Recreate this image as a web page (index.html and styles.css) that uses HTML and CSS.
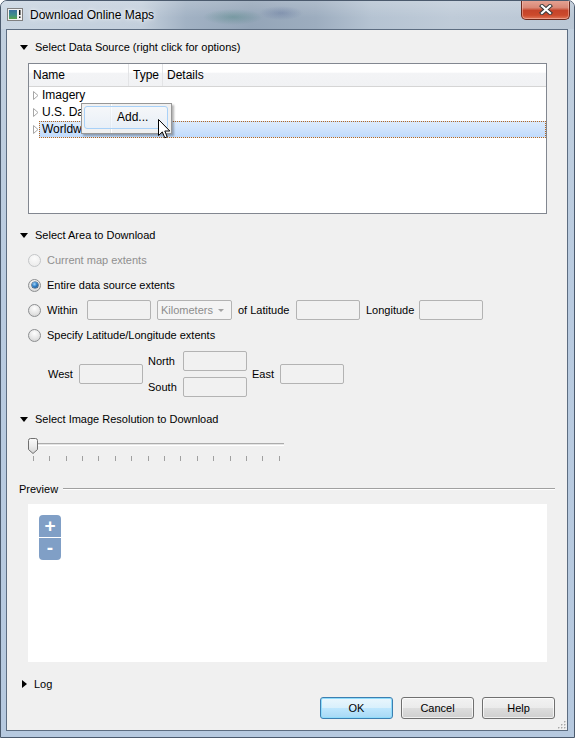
FILE: index.html
```html
<!DOCTYPE html>
<html>
<head>
<meta charset="utf-8">
<title>Download Online Maps</title>
<link rel="stylesheet" href="styles.css">
</head>
<body>
<div class="window">
  <div class="titlebar">
    <svg class="app-icon" width="16" height="13" viewBox="0 0 16 13">
      <defs>
        <linearGradient id="pic" x1="0" y1="0" x2="0" y2="1">
          <stop offset="0" stop-color="#3b6f9e"/>
          <stop offset="0.55" stop-color="#3f8d8a"/>
          <stop offset="1" stop-color="#5aa44c"/>
        </linearGradient>
      </defs>
      <rect x="0.5" y="0.5" width="15" height="12" fill="#f2f2f2" stroke="#808080"/>
      <rect x="2" y="2" width="8" height="9" fill="url(#pic)"/>
      <rect x="12" y="2" width="1.5" height="5" fill="#111"/>
      <rect x="12" y="8.5" width="1.5" height="1.5" fill="#111"/>
    </svg>
    <span class="title">Download Online Maps</span>
    <div class="close-btn">
      <svg width="14" height="11" viewBox="0 0 14 11">
        <path d="M3 2 L11 9 M11 2 L3 9" stroke="#3b3b3b" stroke-width="4.2" stroke-linecap="square"/>
        <path d="M3 2 L11 9 M11 2 L3 9" stroke="#ffffff" stroke-width="2.2" stroke-linecap="square"/>
      </svg>
    </div>
  </div>

  <div class="client">
    <div class="sec-head head-source"><span class="tri-down"></span><span>Select Data Source (right click for options)</span></div>

    <div class="tree">
      <div class="tree-header">
        <div class="th th-name">Name</div>
        <div class="th th-type">Type</div>
        <div class="th th-details">Details</div>
      </div>
      <div class="tree-row">
        <svg class="exp" width="6" height="9" viewBox="0 0 6 9"><path d="M0.5 0.5 L5 4.5 L0.5 8.5 Z" fill="#fff" stroke="#a6a6a6"/></svg>
        <span>Imagery</span>
      </div>
      <div class="tree-row">
        <svg class="exp" width="6" height="9" viewBox="0 0 6 9"><path d="M0.5 0.5 L5 4.5 L0.5 8.5 Z" fill="#fff" stroke="#a6a6a6"/></svg>
        <span>U.S. Data</span>
      </div>
      <div class="tree-row selected">
        <svg class="exp" width="6" height="9" viewBox="0 0 6 9"><path d="M0.5 0.5 L5 4.5 L0.5 8.5 Z" fill="#fff" stroke="#a6a6a6"/></svg>
        <span class="sel-bar">Worldwide Data</span>
      </div>

      <div class="ctx-menu">
        <div class="ctx-item">Add...</div>
      </div>
      <svg class="cursor" width="13" height="20" viewBox="0 0 13 20">
        <path d="M0.5 0.5 L0.5 16.5 L4.3 12.9 L6.8 18.8 L9.2 17.8 L6.8 12 L11.8 12 Z" fill="#ffffff" stroke="#000000" stroke-linejoin="round"/>
      </svg>
    </div>

    <div class="sec-head head-area"><span class="tri-down"></span><span>Select Area to Download</span></div>

    <div class="radio-group">
      <div class="radio-row">
        <span class="radio disabled"></span>
        <span class="disabled-text">Current map extents</span>
      </div>
      <div class="radio-row">
        <span class="radio checked"></span>
        <span>Entire data source extents</span>
      </div>
      <div class="radio-row">
        <span class="radio"></span>
        <span class="lbl lbl-within">Within</span>
        <span class="edit"></span>
        <span class="combo"><span class="combo-text">Kilometers</span><span class="combo-arrow"></span></span>
        <span class="lbl lbl-lat">of Latitude</span>
        <span class="edit"></span>
        <span class="lbl lbl-lon">Longitude</span>
        <span class="edit"></span>
      </div>
      <div class="radio-row">
        <span class="radio"></span>
        <span>Specify Latitude/Longitude extents</span>
      </div>
    </div>

    <div class="extents">
      <span class="lbl lbl-west">West</span>
      <span class="edit"></span>
      <div class="ns-col">
        <div class="ns-row"><span class="lbl lbl-ns">North</span><span class="edit"></span></div>
        <div class="ns-row"><span class="lbl lbl-ns">South</span><span class="edit"></span></div>
      </div>
      <span class="lbl lbl-east">East</span>
      <span class="edit"></span>
    </div>

    <div class="sec-head head-res"><span class="tri-down"></span><span>Select Image Resolution to Download</span></div>

    <svg class="slider" width="260" height="26" viewBox="0 0 260 26">
      <defs>
        <linearGradient id="thumb" x1="0" y1="0" x2="0" y2="1">
          <stop offset="0" stop-color="#fafafa"/>
          <stop offset="0.5" stop-color="#ececec"/>
          <stop offset="1" stop-color="#d4d4d4"/>
        </linearGradient>
      </defs>
      <rect x="5" y="7" width="251" height="1" fill="#acacac"/>
      <rect x="5" y="8" width="251" height="1" fill="#e4e4e4"/>
      <rect x="5" y="9" width="251" height="1" fill="#ffffff"/>
      <g fill="#a0a0a0">
        <rect x="5" y="20" width="1" height="5"/>
        <rect x="21" y="20" width="1" height="5"/>
        <rect x="38" y="20" width="1" height="5"/>
        <rect x="54" y="20" width="1" height="5"/>
        <rect x="70" y="20" width="1" height="5"/>
        <rect x="87" y="20" width="1" height="5"/>
        <rect x="103" y="20" width="1" height="5"/>
        <rect x="120" y="20" width="1" height="5"/>
        <rect x="136" y="20" width="1" height="5"/>
        <rect x="152" y="20" width="1" height="5"/>
        <rect x="169" y="20" width="1" height="5"/>
        <rect x="185" y="20" width="1" height="5"/>
        <rect x="202" y="20" width="1" height="5"/>
        <rect x="218" y="20" width="1" height="5"/>
        <rect x="234" y="20" width="1" height="5"/>
        <rect x="251" y="20" width="1" height="5"/>
      </g>
      <path d="M2.5 2.5 H7.5 Q9.5 2.5 9.5 4.5 V13.5 L5 17.5 L0.5 13.5 V4.5 Q0.5 2.5 2.5 2.5 Z" fill="url(#thumb)" stroke="#6f6f6f"/>
    </svg>

    <div class="group-head">
      <span>Preview</span>
      <span class="hline"></span>
    </div>

    <div class="preview">
      <div class="zoom-ctl">
        <div class="zoom-btn zoom-in">+</div>
        <div class="zoom-btn zoom-out">-</div>
      </div>
    </div>

    <div class="sec-head head-log"><span class="tri-right"></span><span>Log</span></div>

    <div class="buttons">
      <button class="btn default">OK</button>
      <button class="btn">Cancel</button>
      <button class="btn">Help</button>
    </div>

    <svg class="grip" width="9" height="9" viewBox="0 0 9 9">
      <g fill="#ffffff">
        <rect x="8" y="2" width="1" height="1"/>
        <rect x="5" y="5" width="1" height="1"/><rect x="8" y="5" width="1" height="1"/>
        <rect x="2" y="8" width="1" height="1"/><rect x="5" y="8" width="1" height="1"/><rect x="8" y="8" width="1" height="1"/>
      </g>
      <g fill="#a9a9a9">
        <rect x="7" y="1" width="1.5" height="1.5"/>
        <rect x="4" y="4" width="1.5" height="1.5"/><rect x="7" y="4" width="1.5" height="1.5"/>
        <rect x="1" y="7" width="1.5" height="1.5"/><rect x="4" y="7" width="1.5" height="1.5"/><rect x="7" y="7" width="1.5" height="1.5"/>
      </g>
    </svg>
  </div>
</div>
</body>
</html>
```

FILE: styles.css
```css
* { box-sizing: border-box; }

html, body {
  margin: 0;
  padding: 0;
  width: 575px;
  height: 738px;
  overflow: hidden;
  background: #ffffff;
}

body {
  font-family: "Liberation Sans", Arial, sans-serif;
  font-size: 11px;
  color: #000;
}

.window {
  width: 575px;
  height: 738px;
  border: 1px solid #4b5a6d;
  border-radius: 7px 7px 0 0;
  display: flex;
  flex-direction: column;
  background: linear-gradient(to bottom, #c2d0de 0%, #b9cbe0 40%, #b6c9df 100%);
  overflow: hidden;
}

.titlebar {
  height: 28px;
  flex: none;
  display: flex;
  align-items: flex-start;
  padding-left: 6px;
  background:
    radial-gradient(ellipse 30px 8px at 232px 16px, rgba(60, 125, 115, 0.35), transparent),
    radial-gradient(ellipse 22px 7px at 280px 12px, rgba(70, 90, 140, 0.3), transparent),
    linear-gradient(to bottom, rgba(255, 255, 255, 0.18) 0%, rgba(255, 255, 255, 0) 60%),
    linear-gradient(to right, #c9d5e1 0px, #c3cfdc 140px, #a2b2c4 185px, #94a5b8 250px, #9dadbf 315px, #b5c3d2 370px, #bfcbd8 450px, #bac7d5 575px);
}

.app-icon {
  margin-top: 7px;
  flex: none;
}

.title {
  margin-left: 7px;
  margin-top: 7px;
  font-size: 12px;
  line-height: 15px;
  color: #000;
  text-shadow: 0 0 6px rgba(255, 255, 255, 0.9), 0 0 3px rgba(255, 255, 255, 0.8);
}

.close-btn {
  margin-left: auto;
  margin-right: 4px;
  margin-top: -1px;
  width: 49px;
  height: 20px;
  border: 1px solid #6b2a1e;
  border-top: none;
  border-radius: 0 0 5px 5px;
  background: linear-gradient(to bottom, #e6a596 0%, #d98876 40%, #c5442a 55%, #cc4a2c 80%, #e0785a 100%);
  box-shadow: inset 0 0 0 1px rgba(255, 210, 200, 0.45);
  display: flex;
  align-items: center;
  justify-content: center;
}

.client {
  flex: 1;
  margin: 0 6px 6px 5px;
  border: 1px solid #5d6d81;
  background: #f0f0f0;
  position: relative;
  display: flex;
  flex-direction: column;
}

/* section headers */
.sec-head {
  display: flex;
  align-items: center;
  height: 14px;
  padding-left: 13px;
  line-height: 14px;
}

.tri-down {
  width: 0;
  height: 0;
  border-left: 4px solid transparent;
  border-right: 4px solid transparent;
  border-top: 5px solid #000;
  margin-right: 7px;
}

.tri-right {
  width: 0;
  height: 0;
  border-top: 4.5px solid transparent;
  border-bottom: 4.5px solid transparent;
  border-left: 5px solid #000;
  margin-left: 2px;
  margin-right: 7px;
}

.head-source { margin-top: 10px; }
.head-area { margin-top: 14px; }
.head-res { margin-top: 15px; }
.head-log { margin-top: 15px; }

/* tree view */
.tree {
  margin-top: 9px;
  margin-left: 21px;
  width: 519px;
  height: 151px;
  border: 1px solid #828790;
  background: #fff;
  position: relative;
  font-size: 12px;
}

.tree-header {
  display: flex;
  height: 23px;
  border-bottom: 1px solid #d5d5d5;
  background: linear-gradient(to bottom, #ffffff 0%, #ffffff 38%, #f3f4f6 40%, #f1f2f4 100%);
}

.th {
  height: 22px;
  line-height: 23px;
  padding-left: 4px;
  border-right: 1px solid #e3e4e6;
}

.th-name { width: 100px; }
.th-type { width: 34px; }
.th-details { flex: 1; border-right: none; }

.tree-row {
  display: flex;
  align-items: center;
  height: 17px;
  padding-left: 4px;
  line-height: 15px;
}

.exp {
  flex: none;
  margin-right: 3px;
}

.tree-row.selected .exp { margin-right: 0; }

.sel-bar {
  flex: 1;
  height: 17px;
  padding-left: 2px;
  border: 1px dotted #b8681e;
  background: linear-gradient(to bottom, #dcebfc 0%, #cfe3fc 50%, #c1dbfc 100%);
}

.ctx-menu {
  position: absolute;
  left: 52px;
  top: 39px;
  width: 91px;
  height: 31px;
  padding: 2px;
  border: 1px solid #979797;
  background: linear-gradient(to right, #f1f1f1 0, #f1f1f1 28px, #e2e3e3 28px, #e2e3e3 29px, #ffffff 29px, #ffffff 30px, #f0f0f0 30px);
  box-shadow: 2px 2px 2px rgba(0, 0, 0, 0.3);
  z-index: 2;
}

.ctx-item {
  width: 84px;
  height: 23px;
  line-height: 21px;
  padding-left: 32px;
  border: 1px solid #a8d1f8;
  border-radius: 3px;
  background: linear-gradient(to bottom, rgba(248, 251, 255, 0.6) 0%, rgba(225, 238, 252, 0.55) 100%);
  font-size: 12px;
}

.cursor {
  position: absolute;
  left: 129px;
  top: 55px;
  z-index: 3;
}

/* radios */
.radio-group {
  display: flex;
  flex-direction: column;
  gap: 5px;
  margin-top: 8px;
  padding-left: 21px;
}

.radio-row {
  display: flex;
  align-items: center;
  height: 20px;
}

.radio {
  flex: none;
  width: 13px;
  height: 13px;
  border-radius: 50%;
  border: 1px solid #8c8e90;
  background: radial-gradient(circle at 50% 30%, #fefefe 0%, #e6e6e6 55%, #cdcdcd 100%);
  margin-right: 6px;
  position: relative;
}

.radio.disabled {
  border-color: #c4c6c8;
  background: radial-gradient(circle at 50% 30%, #fbfbfb 0%, #f0f0f0 60%, #e8e8e8 100%);
}

.radio.checked::after {
  content: "";
  position: absolute;
  left: 2.5px;
  top: 2.5px;
  width: 6px;
  height: 6px;
  border-radius: 50%;
  background: radial-gradient(circle at 40% 35%, #a5d6f8 0%, #2f7fc8 45%, #0f3d6e 100%);
  box-shadow: 0 0 0 0.6px #1c3f63;
}

.disabled-text { color: #8f8f8f; }

.lbl { flex: none; }
.lbl-within { width: 40px; }
.lbl-lat { width: 58px; margin-left: 6px; }
.lbl-lon { width: 53px; margin-left: 6px; }

.edit {
  flex: none;
  display: block;
  width: 64px;
  height: 20px;
  border: 1px solid #b3b3b3;
  border-radius: 2px;
  background: #f1f1f1;
}

.combo {
  flex: none;
  display: flex;
  align-items: center;
  width: 75px;
  height: 20px;
  margin-left: 6px;
  padding-left: 3px;
  padding-right: 7px;
  border: 1px solid #b3b3b3;
  border-radius: 2px;
  background: #f4f4f4;
  color: #8d8d8d;
}

.combo-arrow {
  margin-left: auto;
  width: 0;
  height: 0;
  border-left: 3px solid transparent;
  border-right: 3px solid transparent;
  border-top: 3px solid #a3a3a3;
}

/* lat/long extents */
.extents {
  display: flex;
  align-items: center;
  margin-top: 6px;
  padding-left: 41px;
}

.lbl-west { width: 31px; }
.lbl-ns { width: 35px; }
.lbl-east { width: 28px; margin-left: 5px; }

.ns-col {
  display: flex;
  flex-direction: column;
  gap: 6px;
  margin-left: 5px;
}

.ns-row {
  display: flex;
  align-items: center;
  height: 20px;
}

/* slider */
.slider {
  display: block;
  margin-top: 10px;
  margin-left: 21px;
}

/* preview group */
.group-head {
  display: flex;
  align-items: center;
  height: 14px;
  margin-top: 20px;
  padding: 0 12px;
}

.hline {
  flex: 1;
  height: 2px;
  margin-left: 5px;
  margin-top: -1px;
  border-top: 1px solid #a0a0a0;
  border-bottom: 1px solid #ffffff;
}

.preview {
  margin-top: 8px;
  margin-left: 21px;
  width: 519px;
  height: 158px;
  background: #ffffff;
  padding: 11px;
}

.zoom-ctl {
  width: 22px;
  display: flex;
  flex-direction: column;
  gap: 1px;
}

.zoom-btn {
  height: 22px;
  background: #809fc6;
  color: #ffffff;
  font-family: "Liberation Sans", Arial, sans-serif;
  font-weight: bold;
  text-align: center;
}

.zoom-in {
  border-radius: 4px 4px 0 0;
  font-size: 19px;
  line-height: 21px;
}

.zoom-out {
  border-radius: 0 0 4px 4px;
  font-size: 19px;
  line-height: 19px;
}

/* buttons */
.buttons {
  display: flex;
  justify-content: flex-end;
  gap: 8px;
  margin-top: 6px;
  padding-right: 12px;
}

.btn {
  width: 73px;
  height: 22px;
  padding: 0;
  border: 1px solid #707070;
  border-radius: 3px;
  background: linear-gradient(to bottom, #f2f2f2 0%, #ebebeb 48%, #dddddd 52%, #cfcfcf 100%);
  box-shadow: inset 0 0 0 1px rgba(255, 255, 255, 0.7);
  font-family: "Liberation Sans", Arial, sans-serif;
  font-size: 11px;
  color: #000;
}

.btn.default {
  border-color: #3c7fb1;
  background: linear-gradient(to bottom, #eaf6fd 0%, #d9f0fc 48%, #bee6fd 52%, #a7d9f5 100%);
  box-shadow: inset 0 0 0 1px #8fdcfb;
}

.grip {
  position: absolute;
  right: 1px;
  bottom: 1px;
}
```
